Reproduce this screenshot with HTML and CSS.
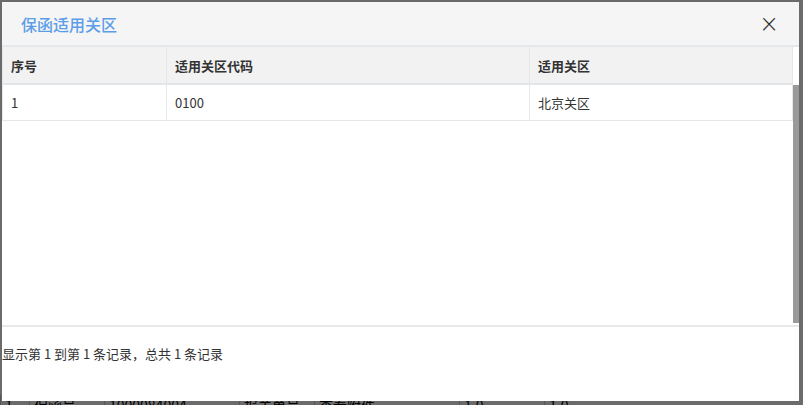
FILE: index.html
```html
<!DOCTYPE html>
<html lang="zh-CN">
<head>
    <meta charset="UTF-8">
    <title>保函适用关区</title>
    <link rel="stylesheet" href="styles.css">
</head>
<body>
<div class="page">
    <div class="page-row">
        <span class="c1">1</span><span class="c2">保函号</span><span class="c3">1000084004</span><span class="c4">报关单号</span><span class="c5">查看附件</span><span class="c6">1.0</span><span class="c7">1.0</span>
    </div>
</div>

<div class="overlay"></div>
<div class="modal">
    <div class="modal-header">
        <span class="modal-title">保函适用关区</span>
        <span class="modal-close">&times;</span>
    </div>
    <div class="grid-head">
        <table class="grid">
            <tr>
                <th class="col-no">序号</th>
                <th class="col-code">适用关区代码</th>
                <th class="col-name">适用关区</th>
            </tr>
        </table>
    </div>
    <div class="grid-body">
        <div class="grid-scroll">
            <table class="grid">
                <tr>
                    <td class="col-no">1</td>
                    <td class="col-code">0100</td>
                    <td class="col-name">北京关区</td>
                </tr>
            </table>
        </div>
        <div class="scrollbar"><div class="scrollbar-thumb"></div></div>
    </div>
    <div class="grid-foot">显示第 1 到第 1 条记录，总共 1 条记录</div>
</div>
</body>
</html>
```

FILE: styles.css
```css
body {
    margin: 0;
    font-family: "Noto Sans CJK SC", "Liberation Sans", sans-serif;
    font-size: 13px;
    color: #333;
    background: #fff;
    width: 803px;
    height: 405px;
    overflow: hidden;
}
.page {
    height: 405px;
    display: flex;
    flex-direction: column;
    justify-content: flex-end;
}
.page-row {
    display: flex;
    height: 10px;
    line-height: 20px;
    font-size: 14px;
    color: #000;
}
.page-row span {
    padding-left: 4px;
    border-left: 1px solid #ccc;
}
.page-row .c1 { width: 24px; }
.page-row .c2 { width: 70px; }
.page-row .c3 { width: 130px; }
.page-row .c4 { width: 70px; }
.page-row .c5 { width: 140px; }
.page-row .c6 { width: 80px; }
.page-row .c7 { width: 80px; }
.overlay {
    position: fixed;
    top: 0;
    left: 0;
    width: 100%;
    height: 100%;
    background: rgba(0, 0, 0, 0.58);
}
.modal {
    position: fixed;
    top: 2px;
    left: 2px;
    width: 797px;
    height: 399px;
    background: #fff;
    display: flex;
    flex-direction: column;
}
.modal-header {
    height: 43px;
    background: #f5f5f5;
    border-bottom: 2px solid #e5e8ea;
    display: flex;
    align-items: center;
    justify-content: space-between;
    padding: 0 20px 0 19px;
}
.modal-title {
    color: #5c9de8;
    font-size: 16px;
    font-weight: 500;
}
.modal-close {
    color: #333;
    font-size: 24px;
    font-weight: 300;
    line-height: 1;
    font-family: "DejaVu Sans", sans-serif;
}
.grid {
    border-collapse: collapse;
    table-layout: fixed;
    width: 791px;
}
.grid th, .grid td {
    text-align: left;
    padding: 0 8px;
    border-right: 1px solid #e6e6e6;
    border-left: 1px solid #e6e6e6;
}
.grid th {
    height: 36px;
    background: #f2f2f2;
    font-weight: bold;
    color: #333;
    border-bottom: 2px solid #e3e6e9;
}
.grid td {
    height: 35px;
    border-bottom: 1px solid #e6e6e6;
    color: #333;
}
.col-no { width: 147px; }
.col-code { width: 346px; }
.grid-head {
    padding-right: 6px;
}
.grid-body {
    height: 240px;
    display: flex;
    border-bottom: 2px solid #e8e8e8;
}
.grid-scroll {
    flex: 1;
    overflow: hidden;
}
.scrollbar {
    width: 6px;
    padding-bottom: 2px;
    display: flex;
}
.scrollbar-thumb {
    flex: 1;
    background: #9a9a9a;
}
.grid-foot {
    padding-top: 17px;
    font-size: 13px;
    color: #333;
}
```
